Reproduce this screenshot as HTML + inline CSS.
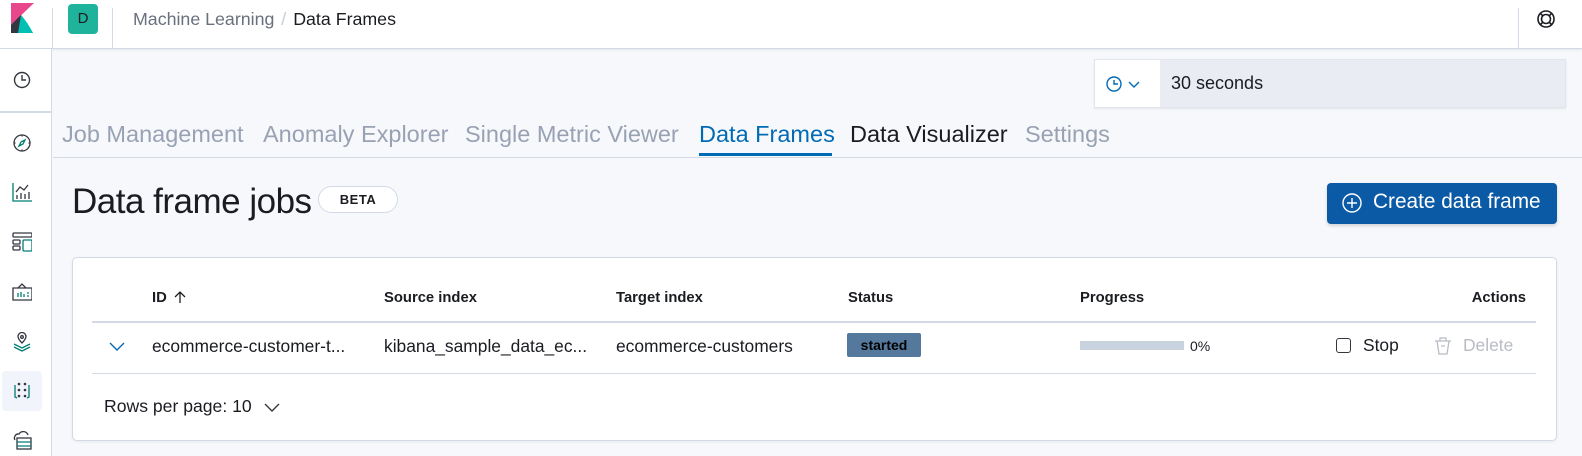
<!DOCTYPE html>
<html><head><style>
*{box-sizing:border-box;margin:0;padding:0}
body{width:1582px;height:456px;overflow:hidden;background:#f7f8fc;font-family:"Liberation Sans",sans-serif;color:#1a1c21;position:relative}
.abs{position:absolute;white-space:nowrap}
svg{position:absolute}
.tab{position:absolute;top:121px;font-size:23.5px;color:#98a2b3;white-space:nowrap}
</style></head><body>
<!-- header -->
<div class="abs" style="left:0;top:0;width:1582px;height:49px;background:#fff;border-bottom:1px solid #d3dae6;box-shadow:0 1px 2px rgba(0,0,0,.08)"></div>
<svg style="left:10px;top:3px" width="25" height="30" viewBox="0 0 25 30"><path d="M1 0H24L1 22Z" fill="#e8488b"/><path d="M1 22 L11 12 L23 30 H1Z" fill="#343741"/><path d="M11 12 Q18 20 23 30 H8 Z" fill="#00bfb3"/><path d="M1 22 L11 12 Q5 18 3 30 H1Z" fill="#343741"/></svg>
<div class="abs" style="left:52px;top:8px;width:1px;height:40px;background:#d3dae6"></div>
<div class="abs" style="left:68px;top:4px;width:30px;height:30px;background:#20b39c;border-radius:4px;font-size:15px;text-align:center;line-height:30px;color:#1a1c21">D</div>
<div class="abs" style="left:112px;top:8px;width:1px;height:40px;background:#d3dae6"></div>
<div class="abs" style="left:133px;top:9px;font-size:17.8px;color:#69707d">Machine Learning <span style="color:#c8ccd4;margin:0 2px">/</span> <span style="color:#1a1c21">Data Frames</span></div>
<div class="abs" style="left:1518px;top:8px;width:1px;height:40px;background:#d3dae6"></div>
<svg style="left:1536px;top:9px" width="20" height="20" viewBox="0 0 20 20" fill="none" stroke="#1a1c21" stroke-width="1.6"><circle cx="10" cy="10" r="8"/><circle cx="10" cy="10" r="4.5"/><path d="M4.5 4.5l2.3 2.3M15.5 4.5l-2.3 2.3M4.5 15.5l2.3-2.3M15.5 15.5l-2.3-2.3"/></svg>
<!-- sidebar -->
<div class="abs" style="left:0;top:49px;width:52px;height:407px;background:#fff;border-right:1px solid #d3dae6"></div>
<div class="abs" style="left:0;top:111px;width:52px;height:2px;background:#d3dae6"></div>
<svg style="left:13px;top:71px" width="18" height="18" viewBox="0 0 18 18" fill="none" stroke="#343741" stroke-width="1.4"><circle cx="9" cy="9" r="7.5"/><path d="M9 4v5h4"/></svg>
<svg style="left:12px;top:133px" width="20" height="20" viewBox="0 0 20 20" fill="none" stroke="#343741" stroke-width="1.3"><circle cx="10" cy="10" r="8"/><path d="M13 7l-4 2-2 4 4-2z" stroke="#017d73"/><path d="M10 2v1.5M10 16.5V18M2 10h1.5M16.5 10H18"/></svg>
<svg style="left:12px;top:182px" width="20" height="20" viewBox="0 0 20 20" fill="none" stroke="#343741" stroke-width="1.3"><path d="M1 1v18h19" stroke="#017d73"/><path d="M4 10l4-5 4 3 4-5"/><path d="M5 17v-4M9 17v-6M13 17v-5M17 17v-7"/></svg>
<svg style="left:12px;top:232px" width="20" height="20" viewBox="0 0 20 20" fill="none" stroke="#343741" stroke-width="1.3"><rect x="1" y="1" width="19" height="4" rx="1"/><rect x="1" y="8" width="7" height="4" rx="1"/><rect x="1" y="14" width="7" height="4" rx="1"/><rect x="11" y="8" width="9" height="11" rx="1" stroke="#017d73"/></svg>
<svg style="left:12px;top:282px" width="20" height="20" viewBox="0 0 20 20" fill="none" stroke="#343741" stroke-width="1.3"><path d="M1 6h19v12H1z"/><path d="M6 6l4-4 4 4"/><path d="M6 15v-4M9 15v-5M12 15v-3M15 11h2M15 14h2" stroke="#017d73"/></svg>
<svg style="left:12px;top:332px" width="20" height="20" viewBox="0 0 20 20" fill="none" stroke="#343741" stroke-width="1.3"><path d="M10 11s-4-4-4-6.5a4 4 0 018 0C14 7 10 11 10 11z"/><circle cx="10" cy="5" r="1.3"/><path d="M2 12l8 4 8-4M2 15l8 4 8-4" stroke="#017d73"/></svg>
<div class="abs" style="left:2px;top:371px;width:40px;height:40px;background:#f1f4fa;border-radius:4px"></div>
<svg style="left:12px;top:381px" width="20" height="20" viewBox="0 0 20 20" fill="#343741" stroke="none"><circle cx="7" cy="3" r="1.3"/><circle cx="13" cy="3" r="1.3"/><circle cx="7" cy="9" r="1.3"/><circle cx="13" cy="9" r="1.3"/><circle cx="7" cy="15" r="1.3"/><circle cx="13" cy="15" r="1.3"/><path d="M3 4v12l2 1M17 4v12l-2 1" fill="none" stroke="#017d73" stroke-width="1.3"/></svg>
<svg style="left:11px;top:428px" width="22" height="22" viewBox="0 0 22 22" fill="none" stroke="#343741" stroke-width="1.3"><path d="M4 12a4 4 0 014-6 5 5 0 019 1"/><rect x="6" y="10" width="14" height="11"/><path d="M6 14h14M6 18h14" stroke="#017d73"/></svg>
<!-- refresh -->
<div class="abs" style="left:1094px;top:59px;width:472px;height:49px;background:#e9edf3;border:1px solid #e0e5ee;box-shadow:0 1px 2px rgba(0,0,0,.08)"></div>
<div class="abs" style="left:1095px;top:60px;width:65px;height:47px;background:#fff"></div>
<svg style="left:1105px;top:75px" width="40" height="18" viewBox="0 0 40 18" fill="none" stroke="#006bb4" stroke-width="1.4"><circle cx="9" cy="9" r="7"/><path d="M9 5v4h4"/><path d="M24 7l5 5 5-5"/></svg>
<div class="abs" style="left:1171px;top:73px;font-size:18px;color:#1a1c21">30 seconds</div>
<!-- tabs -->
<span class="tab" style="left:62px">Job Management</span>
<span class="tab" style="left:263px">Anomaly Explorer</span>
<span class="tab" style="left:465px">Single Metric Viewer</span>
<span class="tab" style="left:699px;color:#006bb4">Data Frames</span>
<span class="tab" style="left:850px;color:#1a1c21">Data Visualizer</span>
<span class="tab" style="left:1025px">Settings</span>
<div class="abs" style="left:699px;top:153px;width:133px;height:3px;background:#006bb4"></div>
<div class="abs" style="left:53px;top:157px;width:1529px;height:1px;background:#d3dae6"></div>
<!-- title -->
<div class="abs" style="left:72px;top:182px;font-size:35px;font-weight:300;color:#1a1c21;letter-spacing:-0.5px">Data frame jobs</div>
<div class="abs" style="left:318px;top:186px;width:80px;height:27px;border:1px solid #d3dae6;border-radius:14px;background:#fff;text-align:center;line-height:25px;font-size:13px;font-weight:bold;letter-spacing:.5px">BETA</div>
<div class="abs" style="left:1327px;top:183px;width:230px;height:41px;background:#0b5aa5;border-radius:4px;box-shadow:0 2px 3px rgba(0,0,0,.15)"></div>
<svg style="left:1341px;top:192px" width="22" height="22" viewBox="0 0 22 22" fill="none" stroke="#fff" stroke-width="1.4"><circle cx="11" cy="11" r="9"/><path d="M11 6v10M6 11h10"/></svg>
<div class="abs" style="left:1373px;top:190px;font-size:20.8px;color:#fff">Create data frame</div>
<!-- panel -->
<div class="abs" style="left:72px;top:257px;width:1485px;height:184px;background:#fff;border:1px solid #d3dae6;border-radius:5px;box-shadow:0 1px 3px rgba(0,0,0,.06)"></div>
<div class="abs" style="top:290px;left:0;font-size:14.8px;font-weight:bold;width:1582px">
<span class="abs" style="left:152px">ID</span>
<span class="abs" style="left:384px">Source index</span>
<span class="abs" style="left:616px">Target index</span>
<span class="abs" style="left:848px">Status</span>
<span class="abs" style="left:1080px">Progress</span>
<span class="abs" style="right:56px">Actions</span></div>
<svg style="left:173px;top:290px" width="14" height="14" viewBox="0 0 14 14" fill="none" stroke="#1a1c21" stroke-width="1.3"><path d="M7 13V2M2 7l5-5 5 5"/></svg>
<div class="abs" style="left:92px;top:321px;width:1444px;height:2px;background:#d3dae6"></div>
<svg style="left:108px;top:340px" width="18" height="12" viewBox="0 0 18 12" fill="none" stroke="#006bb4" stroke-width="1.4"><path d="M2 3l7 7 7-7"/></svg>
<div class="abs" style="top:336px;left:0;font-size:17.4px;width:1582px">
<span class="abs" style="left:152px">ecommerce-customer-t...</span>
<span class="abs" style="left:384px">kibana_sample_data_ec...</span>
<span class="abs" style="left:616px">ecommerce-customers</span></div>
<div class="abs" style="left:847px;top:333px;width:74px;height:24px;background:#54799d;border-radius:2px;color:#000;font-size:14px;font-weight:bold;text-align:center;line-height:24px">started</div>
<div class="abs" style="left:1080px;top:341px;width:104px;height:9px;background:#c9d2df"></div>
<div class="abs" style="left:1190px;top:338px;font-size:14px">0%</div>
<div class="abs" style="left:1336px;top:338px;width:15px;height:15px;border:1.5px solid #343741;border-radius:3px"></div>
<div class="abs" style="left:1363px;top:335px;font-size:17.4px">Stop</div>
<svg style="left:1433px;top:335px" width="20" height="22" viewBox="0 0 20 22" fill="none" stroke="#b8bcc4" stroke-width="1.3"><path d="M2 6h16M7 6V3h6v3M4 6l2 13h8l2-13M8 11h4"/></svg>
<div class="abs" style="left:1463px;top:335px;font-size:17.4px;color:#b8bcc4">Delete</div>
<div class="abs" style="left:92px;top:373px;width:1444px;height:1px;background:#d3dae6"></div>
<div class="abs" style="left:104px;top:396px;font-size:17.6px">Rows per page: 10</div>
<svg style="left:263px;top:401px" width="18" height="12" viewBox="0 0 18 12" fill="none" stroke="#343741" stroke-width="1.4"><path d="M2 3l7 7 7-7"/></svg>
</body></html>
